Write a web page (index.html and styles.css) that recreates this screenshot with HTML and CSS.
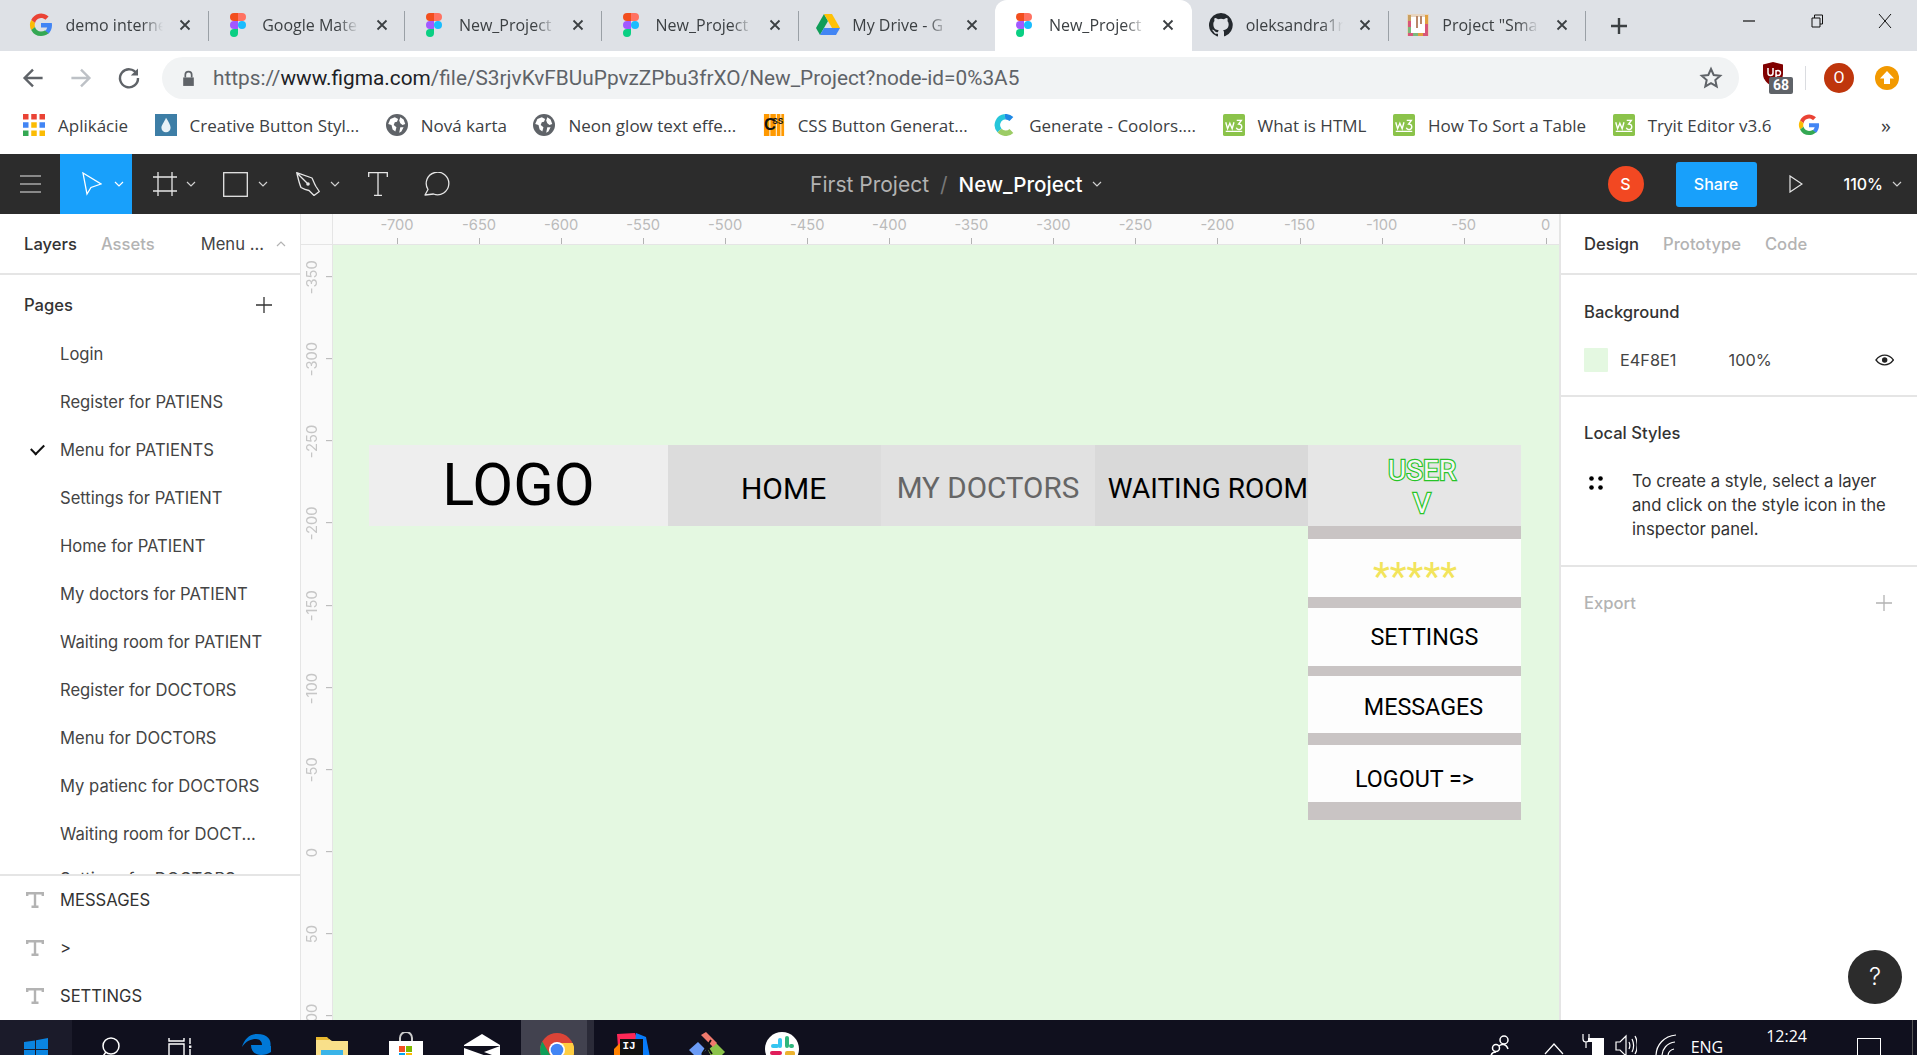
FILE: index.html
```html
<!DOCTYPE html>
<html lang="en">
<head>
<meta charset="utf-8">
<title>New_Project - Figma</title>
<link rel="stylesheet" href="styles.css">
</head>
<body>
<svg class="defs" width="0" height="0" aria-hidden="true">
  <defs>
    <symbol id="figma" viewBox="0 0 16 24">
      <path fill="#f24e1e" d="M0 4a4 4 0 0 1 4-4h4v8H4a4 4 0 0 1-4-4z"/>
      <path fill="#ff7262" d="M8 0h4a4 4 0 0 1 0 8H8z"/>
      <path fill="#a259ff" d="M0 12a4 4 0 0 1 4-4h4v8H4a4 4 0 0 1-4-4z"/>
      <circle fill="#1abcfe" cx="12" cy="12" r="4"/>
      <path fill="#0acf83" d="M0 20a4 4 0 0 1 4-4h4v4a4 4 0 0 1-8 0z"/>
    </symbol>
    <symbol id="google" viewBox="0 0 24 24">
      <path fill="#ea4335" d="M12 5c1.700 0 3.200.6 4.400 1.700l3.200-3.200A11 11 0 0 0 2.200 7l3.800 3A6.600 6.600 0 0 1 12 5z"/>
      <path fill="#4285f4" d="M23 12.300c0-.8-.1-1.600-.2-2.300H12v4.400h6.200a5.300 5.300 0 0 1-2.300 3.500l3.600 2.800c2.100-2 3.500-4.900 3.500-8.400z"/>
      <path fill="#fbbc05" d="M6 14a6.700 6.700 0 0 1 0-4L2.200 7a11 11 0 0 0 0 10z"/>
      <path fill="#34a853" d="M12 23c3 0 5.500-1 7.500-2.800l-3.600-2.800c-1 .7-2.300 1.100-3.900 1.100a6.600 6.600 0 0 1-6-4.500l-3.800 3A11 11 0 0 0 12 23z"/>
    </symbol>
    <symbol id="drive" viewBox="0 0 24 22">
      <path fill="#0f9d58" d="M8 0 0 14l4 7 8-14z"/>
      <path fill="#ffc107" d="M8 0h8l8 14h-8z"/>
      <path fill="#4285f4" d="M4 21h16l4-7H8z"/>
    </symbol>
    <symbol id="github" viewBox="0 0 16 16">
      <path fill="#24292e" d="M8 0a8 8 0 0 0-2.500 15.600c.4.100.5-.2.500-.4v-1.400c-2.200.5-2.700-1-2.700-1-.4-.9-.9-1.200-.9-1.200-.7-.5.100-.5.100-.5.800.1 1.200.8 1.200.8.700 1.200 1.900.9 2.300.7.100-.5.300-.9.500-1.100-1.800-.2-3.600-.9-3.600-4 0-.9.300-1.600.8-2.100-.1-.2-.4-1 .1-2.100 0 0 .7-.2 2.200.8a7.600 7.600 0 0 1 4 0c1.500-1 2.200-.8 2.200-.8.400 1.100.2 1.900.1 2.100.5.600.8 1.300.8 2.100 0 3.100-1.900 3.700-3.700 3.900.3.300.6.800.6 1.500v2.200c0 .2.100.5.600.4A8 8 0 0 0 8 0z"/>
    </symbol>
    <symbol id="globe" viewBox="0 0 20 20">
      <circle cx="10" cy="10" r="10" fill="#5f6368"/>
      <path fill="#fff" d="M4 4.500 8 3l3 1.500-1 2.500-2 .5L7 10l2.500 2-1 4L6 14l-1-4-3-1zM13 3l3 2 1.500 4-2.500 1-2-1.500L12 6zM13 12h3l-2 4-2 1z"/>
    </symbol>
    <symbol id="w3" viewBox="0 0 24 24">
      <rect width="24" height="24" rx="2" fill="#8bc34a"/>
      <path fill="none" stroke="#fff" stroke-width="1.500" d="M3 9l2 7 2.500-6 2.500 6 2-7M15 7h5l-3 4c2 0 3.500 1 3.500 3s-1.500 3-3 3-2.500-.7-3-2M3 19h18"/>
    </symbol>
    <symbol id="chev" viewBox="0 0 10 6">
      <path fill="none" stroke="currentColor" stroke-width="1.200" d="M1 1l4 4 4-4"/>
    </symbol>
    <symbol id="x" viewBox="0 0 12 12">
      <path fill="none" stroke="#3c4043" stroke-width="1.800" d="M1.500 1.500l9 9M10.500 1.500l-9 9"/>
    </symbol>
    <symbol id="type" viewBox="0 0 18 16">
      <path fill="none" stroke="#b3b3b3" stroke-width="2.400" d="M1.200 4V1.200h15.600V4M9 1.200v13.600M5.500 14.800h7"/>
    </symbol>
    <symbol id="plus" viewBox="0 0 18 18">
      <path fill="none" stroke="currentColor" stroke-width="1.300" d="M9 1v16M1 9h16"/>
    </symbol>
  </defs>
</svg>

<header class="chrome">
  <div class="tabs">
    <div class="tab sep"><svg class="fav"><use href="#google"/></svg><span class="tab-title">demo interne</span><svg class="tab-x"><use href="#x"/></svg></div>
    <div class="tab sep"><svg class="fav"><use href="#figma"/></svg><span class="tab-title">Google Mate</span><svg class="tab-x"><use href="#x"/></svg></div>
    <div class="tab sep"><svg class="fav"><use href="#figma"/></svg><span class="tab-title">New_Project</span><svg class="tab-x"><use href="#x"/></svg></div>
    <div class="tab sep"><svg class="fav"><use href="#figma"/></svg><span class="tab-title">New_Project</span><svg class="tab-x"><use href="#x"/></svg></div>
    <div class="tab"><svg class="fav"><use href="#drive"/></svg><span class="tab-title">My Drive - G</span><svg class="tab-x"><use href="#x"/></svg></div>
    <div class="tab active"><svg class="fav"><use href="#figma"/></svg><span class="tab-title">New_Project</span><svg class="tab-x"><use href="#x"/></svg></div>
    <div class="tab sep"><svg class="fav"><use href="#github"/></svg><span class="tab-title">oleksandra1r</span><svg class="tab-x"><use href="#x"/></svg></div>
    <div class="tab sep"><svg class="fav" viewBox="0 0 24 24"><rect x="1" y="1" width="22" height="22" fill="#e8d5c0"/><rect x="5" y="4" width="14" height="16" fill="#fff"/><path d="M10 3h2v12h-2zM14 3h2v8h-2z" fill="#b9876a"/><path d="M2 20h5v3H2z" fill="#d8567a"/><path d="M7 20h5v3H7z" fill="#7cb87c"/><path d="M12 20h5v3h-5z" fill="#e0a040"/><path d="M17 20h5v3h-5z" fill="#d8567a"/><path d="M2 2h3v6H2z" fill="#c9a060"/><path d="M2 8h3v6H2z" fill="#d8567a"/><path d="M2 14h3v6H2z" fill="#7cb87c"/><path d="M19 2h3v9h-3z" fill="#e0a040"/><path d="M19 11h3v9h-3z" fill="#d8567a"/></svg><span class="tab-title">Project "Sma</span><svg class="tab-x"><use href="#x"/></svg></div>
    <svg class="new-tab" viewBox="0 0 18 18"><path fill="none" stroke="#3c4043" stroke-width="2.400" d="M9 1v16M1 9h16"/></svg>
    <div class="window-btns">
      <svg class="win-btn" viewBox="0 0 16 16"><path stroke="#111" stroke-width="1.200" d="M2 8h12"/></svg>
      <svg class="win-btn" viewBox="0 0 16 16"><path fill="none" stroke="#111" stroke-width="1" d="M3 5h8v9H3zM5.500 5V2h8v9H11"/></svg>
      <svg class="win-btn" viewBox="0 0 16 16"><path fill="none" stroke="#111" stroke-width="1" d="M2 1l12 14M14 1 2 15"/></svg>
    </div>
  </div>

  <div class="addressbar">
    <svg class="nav-ic" viewBox="0 0 20 20"><path fill="none" stroke="#5f6368" stroke-width="2" d="M18 10H3M10 3l-7 7 7 7"/></svg>
    <svg class="nav-ic" viewBox="0 0 20 20"><path fill="none" stroke="#bdc1c6" stroke-width="2" d="M2 10h15M10 3l7 7-7 7"/></svg>
    <svg class="nav-ic" viewBox="0 0 20 20"><path fill="none" stroke="#5f6368" stroke-width="2" d="M16.500 6.500A7.500 7.500 0 1 0 17.500 10"/><path fill="#5f6368" d="M17.500 2v6h-6z"/></svg>
    <div class="omnibox">
      <svg class="lock" viewBox="0 0 12 16"><path fill="#5f6368" d="M1 7h10v8H1z"/><path fill="none" stroke="#5f6368" stroke-width="1.600" d="M3 7V4.500a3 3 0 0 1 6 0V7"/></svg>
      <span class="url"><span class="url-dim">https://</span>www.figma.com<span class="url-dim">/file/S3rjvKvFBUuPpvzZPbu3frXO/New_Project?node-id=0%3A5</span></span>
      <svg class="star" viewBox="0 0 24 24"><path fill="none" stroke="#5f6368" stroke-width="2" d="M12 3l2.700 6 6.500.7-4.900 4.300 1.400 6.400L12 17.100l-5.700 3.300 1.400-6.400-4.900-4.300 6.500-.7z"/></svg>
    </div>
    <div class="ext">
      <svg class="ublock" viewBox="0 0 22 25"><path fill="#800000" d="M11 0l10 2.500V12c0 6-5 10-10 13C6 22 1 18 1 12V2.500z"/><path fill="none" stroke="#fff" stroke-width="1.500" d="M6 6v5a2.500 2.500 0 0 0 5 0V6M14 8v8M14 9.500a2.500 2.500 0 1 1 0 3"/></svg>
      <span class="ext-badge">68</span>
    </div>
    <span class="ext-sep"></span>
    <span class="profile">O</span>
    <svg class="update" viewBox="0 0 24 24"><circle cx="12" cy="12" r="12" fill="#f29900"/><path fill="#fff" d="M12 5l7 7.500h-4V18H9v-5.500H5z"/></svg>
  </div>

  <nav class="bookmarks">
    <span class="bm"><svg class="bm-ic" viewBox="0 0 20 20"><g><rect width="5" height="5" fill="#ea4335"/><rect x="7.500" width="5" height="5" fill="#ea4335"/><rect x="15" width="5" height="5" fill="#ea4335"/><rect y="7.500" width="5" height="5" fill="#4285f4"/><rect x="7.500" y="7.500" width="5" height="5" fill="#fbbc05"/><rect x="15" y="7.500" width="5" height="5" fill="#4285f4"/><rect y="15" width="5" height="5" fill="#34a853"/><rect x="7.500" y="15" width="5" height="5" fill="#fbbc05"/><rect x="15" y="15" width="5" height="5" fill="#fbbc05"/></g></svg>Aplikácie</span>
    <span class="bm"><svg class="bm-ic" viewBox="0 0 24 24"><rect width="24" height="24" fill="#3d7ea6"/><path fill="#e8f2f7" d="M12 4c3 5 5 8 5 11a5 5 0 0 1-10 0c0-3 3-6 5-11z"/></svg>Creative Button Styl...</span>
    <span class="bm"><svg class="bm-ic"><use href="#globe"/></svg>Nová karta</span>
    <span class="bm"><svg class="bm-ic"><use href="#globe"/></svg>Neon glow text effe...</span>
    <span class="bm"><svg class="bm-ic" viewBox="0 0 22 24"><rect width="22" height="24" fill="#f90"/><path fill="#fff" d="M6 0h1v24H6zM13 0h1v24h-1zM18 0h1v24h-1z"/><text x="0" y="17" class="css-t">C</text><text x="9" y="11" class="css-s">SS</text></svg>CSS Button Generat...</span>
    <span class="bm"><svg class="bm-ic" viewBox="0 0 24 24"><path fill="none" stroke="#1e88e5" stroke-width="6" d="M19 5.500A9 9 0 0 0 12 3"/><path fill="none" stroke="#26c6da" stroke-width="6" d="M12 3a9 9 0 0 0-6 15"/><path fill="none" stroke="#9ccc65" stroke-width="6" d="M6 18a9 9 0 0 0 13 .5"/></svg>Generate - Coolors....</span>
    <span class="bm"><svg class="bm-ic"><use href="#w3"/></svg>What is HTML</span>
    <span class="bm"><svg class="bm-ic"><use href="#w3"/></svg>How To Sort a Table</span>
    <span class="bm"><svg class="bm-ic"><use href="#w3"/></svg>Tryit Editor v3.6</span>
    <span class="bm"><svg class="bm-ic"><use href="#google"/></svg></span>
    <span class="bm-more">»</span>
  </nav>
</header>

<section class="figma-bar">
  <div class="tools">
    <svg class="burger" viewBox="0 0 21 18"><path stroke="#e6e6e6" stroke-width="1.200" d="M0 1h21M0 9h21M0 17h21"/></svg>
    <div class="tool-active">
      <svg class="ic-move" viewBox="0 0 20 24"><path fill="none" stroke="#fff" stroke-width="1.300" d="M1 1l18 11-10 3.500L5 22z"/></svg>
      <svg class="chev chev-w"><use href="#chev"/></svg>
    </div>
    <svg class="ic-frame" viewBox="0 0 24 24"><path fill="none" stroke="#e6e6e6" stroke-width="1.300" d="M5 0v24M19 0v24M0 5h24M0 19h24"/></svg>
    <svg class="chev ch-frame"><use href="#chev"/></svg>
    <svg class="ic-rect" viewBox="0 0 25 25"><rect x=".7" y=".7" width="23.600" height="23.600" fill="none" stroke="#e6e6e6" stroke-width="1.300"/></svg>
    <svg class="chev ch-rect"><use href="#chev"/></svg>
    <svg class="ic-pen" viewBox="0 0 24 24"><path fill="none" stroke="#e6e6e6" stroke-width="1.300" stroke-linejoin="round" d="M.7.700 16 6c1.500 3 2.500 6 4 8.500l3.300 5-5.300 4-5-5c-3-.5-5.500-1.500-8-3C3 11 2 5.500.7.700zM.7.700 11 11"/><circle cx="12" cy="12" r="1.800" fill="#e6e6e6"/></svg>
    <svg class="chev ch-pen"><use href="#chev"/></svg>
    <svg class="ic-t" viewBox="0 0 20 24"><path fill="none" stroke="#e6e6e6" stroke-width="1.300" d="M.7 5V.7h18.600V5M10 .7v22.600M6 23.300h8"/></svg>
    <svg class="ic-comment" viewBox="0 0 26 24"><path fill="none" stroke="#e6e6e6" stroke-width="1.300" stroke-linejoin="round" d="M1 23l3-5.500A11.300 11.300 0 1 1 9.500 22z"/></svg>
  </div>
  <div class="doc-title">
    <span class="doc-folder">First Project</span>
    <span class="doc-slash">/</span>
    <span class="doc-name">New_Project</span>
    <svg class="chev"><use href="#chev"/></svg>
  </div>
  <div class="bar-right">
    <span class="avatar">S</span>
    <span class="share">Share</span>
    <svg class="play" viewBox="0 0 14 18"><path fill="none" stroke="#e6e6e6" stroke-width="1.200" d="M1 1l12 8-12 8z"/></svg>
    <span class="zoom-val">110%</span>
    <svg class="chev"><use href="#chev"/></svg>
  </div>
</section>

<main class="workspace">
  <aside class="left-panel">
    <div class="panel-tabs">
      <span class="ptab on">Layers</span>
      <span class="ptab off">Assets</span>
      <span class="page-name">Menu ...</span>
      <svg class="chev-up" viewBox="0 0 10 6"><path fill="none" stroke="#b3b3b3" stroke-width="1.200" d="M1 5l4-4 4 4"/></svg>
    </div>
    <div class="pages">
      <div class="pages-head"><span class="label">Pages</span><svg class="plus"><use href="#plus"/></svg></div>
      <ul class="page-list">
        <li>Login</li>
        <li>Register for PATIENS</li>
        <li class="current">Menu for PATIENTS</li>
        <li>Settings for PATIENT</li>
        <li>Home for PATIENT</li>
        <li>My doctors for PATIENT</li>
        <li>Waiting room for PATIENT</li>
        <li>Register for DOCTORS</li>
        <li>Menu for DOCTORS</li>
        <li>My patienc for DOCTORS</li>
        <li>Waiting room for DOCT...</li>
        <li class="peek">Settings for DOCTORS</li>
      </ul>
    </div>
    <ul class="layers">
      <li><svg class="t-ic"><use href="#type"/></svg>MESSAGES</li>
      <li><svg class="t-ic"><use href="#type"/></svg>&gt;</li>
      <li><svg class="t-ic"><use href="#type"/></svg>SETTINGS</li>
    </ul>
  </aside>

  <div class="stage">
    <div class="ruler-corner"></div>
    <div class="ruler-h">
      <span>-700</span><span>-650</span><span>-600</span><span>-550</span><span>-500</span><span>-450</span><span>-400</span><span>-350</span><span>-300</span><span>-250</span><span>-200</span><span>-150</span><span>-100</span><span>-50</span><span>0</span>
    </div>
    <div class="ruler-v">
      <span>-350</span><span>-300</span><span>-250</span><span>-200</span><span>-150</span><span>-100</span><span>-50</span><span>0</span><span>50</span><span>100</span>
    </div>
    <div class="canvas">
      <div class="mock">
        <div class="mock-nav">
          <div class="m-logo">LOGO</div>
          <div class="m-item m-home">HOME</div>
          <div class="m-item m-docs">MY DOCTORS</div>
          <div class="m-item m-wait">WAITING ROOM</div>
          <div class="m-user"><span>USER</span><span>V</span></div>
        </div>
        <div class="mock-menu">
          <div class="m-bar b13"></div>
          <div class="m-row m-stars">*****</div>
          <div class="m-bar b11"></div>
          <div class="m-row m-set">SETTINGS</div>
          <div class="m-bar b10"></div>
          <div class="m-row m-msg">MESSAGES</div>
          <div class="m-bar b12"></div>
          <div class="m-row m-out">LOGOUT =&gt;</div>
          <div class="m-bar b18"></div>
        </div>
      </div>
    </div>
  </div>

  <aside class="right-panel">
    <div class="panel-tabs right-tabs">
      <span class="ptab on">Design</span>
      <span class="ptab off">Prototype</span>
      <span class="ptab off">Code</span>
    </div>
    <section class="sec sec-bg">
      <div class="label">Background</div>
      <div class="bg-row">
        <span class="swatch"></span>
        <span class="hex">E4F8E1</span>
        <span class="pct">100%</span>
        <svg class="eye" viewBox="0 0 20 12"><path fill="none" stroke="#222" stroke-width="1.300" d="M1 6c2.500-3.300 5.500-5 9-5s6.500 1.700 9 5c-2.500 3.300-5.500 5-9 5S3.500 9.300 1 6z"/><circle cx="10" cy="6" r="2.800" fill="#222"/></svg>
      </div>
    </section>
    <section class="sec sec-styles">
      <div class="label">Local Styles</div>
      <div class="style-row">
        <svg class="dots" viewBox="0 0 14 14"><circle cx="2.500" cy="2.500" r="2.300"/><circle cx="11.500" cy="2.500" r="2.300"/><circle cx="2.500" cy="11.500" r="2.300"/><circle cx="11.500" cy="11.500" r="2.300"/></svg>
        <p>To create a style, select a layer and click on the style icon in the inspector panel.</p>
      </div>
    </section>
    <section class="sec-export">
      <span class="label off-label">Export</span>
      <svg class="plus plus-off"><use href="#plus"/></svg>
    </section>
    <div class="help">?</div>
  </aside>
</main>

<footer class="taskbar">
  <div class="start"><svg class="win-logo" viewBox="0 0 24 24"><path fill="#0a84e0" d="M0 4l11-1.500V11H0zM12 2.300 24 0v11H12zM0 12h11v9L0 19.500zM12 12h12v12l-12-2z"/></svg></div>
  <svg class="tb-search" viewBox="0 0 24 24"><circle cx="11" cy="10" r="8" fill="none" stroke="#fff" stroke-width="1.500"/><path stroke="#fff" stroke-width="1.500" d="M6 16l-5 7"/></svg>
  <svg class="tb-view" viewBox="0 0 24 24"><path fill="none" stroke="#fff" stroke-width="1.400" d="M1 0v3h15V0M1 6h15v16H1zM22 0v6M22 11v11"/><path fill="#fff" d="M21 7.500h2.400v2.400H21z"/></svg>
  <svg class="tb-edge" viewBox="0 0 30 24"><path fill="#0078d7" d="M15 0C7 0 2 6 0 13c4-6 9-8 14-8 4 0 6 3 6 6H9c0 6 4 10 10 10 4 0 7-1 10-3v-6h-.5c.5-4-.5-12-13.500-12z"/></svg>
  <svg class="tb-folder" viewBox="0 0 32 24"><path fill="#f9e08a" d="M0 2h13l3 2h16v20H0z"/><path fill="#e8b830" d="M0 0h11l3 3H0z"/><path fill="#3ab4e8" d="M5 13h22v11H5z"/></svg>
  <svg class="tb-store" viewBox="0 0 34 30"><path fill="none" stroke="#ccc" stroke-width="2" d="M11 10V6a6 6 0 0 1 12 0v4"/><path fill="#fff" d="M0 9h34v21H0z"/><path fill="#f25022" d="M10 14h6v6h-6z"/><path fill="#7fba00" d="M17 14h6v6h-6z"/><path fill="#00a4ef" d="M10 21h6v6h-6z"/><path fill="#ffb900" d="M17 21h6v6h-6z"/></svg>
  <svg class="tb-mail" viewBox="0 0 36 24"><path fill="#fff" d="M18 0l18 11v13H0V11z"/><path fill="#10101e" d="M0 12h36L20 18l16 6h-8L0 14z"/></svg>
  <div class="tb-active"><svg class="tb-chrome" viewBox="0 0 34 34"><circle cx="17" cy="17" r="17" fill="#db4437"/><path fill="#0f9d58" d="M2.300 8.500 9.500 21l5 12.800A17 17 0 0 1 2.300 8.500z"/><path fill="#ffcd40" d="M17 10h15.700A17 17 0 0 1 14.500 33.800L24 21z"/><circle cx="17" cy="17" r="8" fill="#fff"/><circle cx="17" cy="17" r="6.300" fill="#4285f4"/></svg></div>
  <svg class="tb-ij" viewBox="0 0 36 24"><path fill="#fe2857" d="M3 1l18-1 3 8-20 6z"/><path fill="#087cfa" d="M22 0l10 4 4 20H20z"/><path fill="#ff8100" d="M0 16l6-6v14H0z"/><rect x="6" y="6" width="23" height="18" fill="#111"/><text x="8.500" y="16" class="ij-t">IJ</text></svg>
  <svg class="tb-sk" viewBox="0 0 36 24"><path fill="#6b9bf5" d="M9 10l8 8-6 6H6L0 18z"/><path fill="#8bc34a" d="M27 11l9 9-4 4H22l-3-6z"/><path fill="#ef7a6e" d="M12 3l5-3 11 11-4 4z"/><path stroke="#111" stroke-width="1.800" d="M14 8l9 14M22 8l-9 14"/></svg>
  <svg class="tb-slack" viewBox="0 0 34 34"><circle cx="17" cy="17" r="17" fill="#fff"/><rect x="13" y="6" width="4" height="10" rx="2" fill="#36c5f0"/><rect x="6" y="12" width="8" height="4" rx="2" fill="#36c5f0"/><rect x="20" y="4" width="4" height="12" rx="2" fill="#2eb67d"/><rect x="24" y="12" width="5" height="4" rx="2" fill="#2eb67d"/><rect x="5" y="19" width="12" height="4" rx="2" fill="#e01e5a"/><rect x="20" y="19" width="10" height="5" rx="2" fill="#ecb22e"/></svg>
  <div class="tray">
    <svg class="tr-people" viewBox="0 0 22 22"><g fill="none" stroke="#fff" stroke-width="1.500"><circle cx="14" cy="5" r="4"/><circle cx="6" cy="13" r="3.500"/><path d="M9 11c2-2 7-3 9 3M1 22c0-3 2-5 5-5"/></g></svg>
    <svg class="tr-up" viewBox="0 0 20 12"><path fill="none" stroke="#fff" stroke-width="1.200" d="M1 11l9-10 9 10"/></svg>
    <svg class="tr-bat" viewBox="0 0 24 22"><path fill="none" stroke="#fff" stroke-width="1.200" d="M3 0v5a3 3 0 0 0 6 0V0M6 8v6"/><path fill="#fff" d="M8 4h16v18H12V8H8z"/></svg>
    <svg class="tr-vol" viewBox="0 0 22 22"><path fill="none" stroke="#fff" stroke-width="1.200" d="M1 8h4l6-6v20l-6-6H1zM14 8c1 2 1 5 0 7M17 5c2 4 2 9 0 13M20 2c3 5 3 13 0 18"/></svg>
    <svg class="tr-wifi" viewBox="0 0 22 22"><path fill="none" stroke="#fff" stroke-width="1.200" d="M1 22C1 11 9 2 21 1M7 22c0-7 5-13 13-14M13 22c0-3 2-6 6-7"/></svg>
    <span class="tr-lang">ENG</span>
    <span class="tr-clock">12:24</span>
    <span class="tr-notify"></span>
    <span class="tr-desk"></span>
  </div>
</footer>
</body>
</html>
```
FILE: styles.css
```css
* { box-sizing: border-box; }
html, body { margin: 0; height: 100%; }
body {
  width: 1917px; height: 1055px; overflow: hidden;
  display: flex; flex-direction: column;
  font-family: Inter, "Liberation Sans", sans-serif;
  color: #333; background: #fff;
}
.defs { position: absolute; }
ul { list-style: none; margin: 0; padding: 0; }

/* browser chrome */
.chrome { flex: none; font-family: "Open Sans", "Liberation Sans", sans-serif; color: #3c4043; }
.tabs { height: 51px; background: #dee1e6; display: flex; align-items: center; padding-left: 12px; }
.tab {
  position: relative; flex: none; width: 196.700px; height: 51px;
  display: flex; align-items: center; padding: 0 0 2px 17px; font-size: 16px;
}
.tab.sep::after {
  content: ""; position: absolute; right: 0; top: 11px; height: 30px; width: 1px; background: #9aa0a6;
}
.tab.active { background: #fff; border-radius: 12px 12px 0 0; }
.fav { width: 24px; height: 24px; flex: none; }
.tab-title {
  width: 97px; margin-left: 12.500px; white-space: nowrap; overflow: hidden;
  -webkit-mask-image: linear-gradient(90deg, #000 78%, transparent 100%);
  mask-image: linear-gradient(90deg, #000 78%, transparent 100%);
}
.tab-x { width: 12px; height: 12px; margin-left: 16.500px; flex: none; }
.new-tab { width: 18px; height: 18px; margin-left: 24px; flex: none; }
.window-btns { margin-left: auto; display: flex; gap: 52px; padding-right: 24px; align-self: flex-start; padding-top: 13px; }
.win-btn { width: 16px; height: 16px; }

.addressbar { height: 51px; display: flex; align-items: center; padding: 3px 0 0 21px; }
.nav-ic { width: 24px; height: 24px; margin-right: 24px; flex: none; }
.nav-ic:nth-child(3) { margin-right: 20px; }
.omnibox {
  width: 1577px; height: 42px; border-radius: 21px; background: #f1f3f4;
  display: flex; align-items: center; padding: 0 16px 0 20px; flex: none; margin-left: 1px;
}
.lock { width: 13px; height: 17px; flex: none; }
.url { margin-left: 18px; font: 20.800px Roboto, sans-serif; color: #202124; white-space: nowrap; flex: 1; }
.url-dim { color: #5f6368; }
.star { width: 24px; height: 24px; flex: none; }
.ext { position: relative; margin-left: 23px; width: 31px; height: 32px; flex: none; }
.ublock { width: 22px; height: 25px; display: block; }
.ext-badge {
  position: absolute; left: 7px; top: 15px; width: 24px; height: 17px; border-radius: 2px;
  background: #5f6368; color: #fff; font: 700 14px/17px Roboto, sans-serif; text-align: center;
}
.ext-sep { width: 1px; height: 24px; background: #dadce0; margin-left: 12px; flex: none; }
.profile {
  width: 30px; height: 30px; border-radius: 50%; background: #bf360c; color: #fff; margin-left: 18px; flex: none;
  font: 16px/30px Roboto, sans-serif; text-align: center;
}
.update { width: 24px; height: 24px; margin-left: 21px; flex: none; }

.bookmarks { height: 52px; display: flex; align-items: center; padding: 0 0 6px 23px; gap: 26.500px; font-size: 17px; white-space: nowrap; }
.bm { display: flex; align-items: center; gap: 13px; }
.bm-ic { width: 22px; height: 22px; flex: none; }
.css-t { font: bold 18px "Liberation Sans", sans-serif; fill: #111; }
.css-s { font: bold 9px "Liberation Sans", sans-serif; fill: #111; }
.bm-more { margin-left: auto; margin-right: 26px; font-size: 20px; }

/* figma toolbar */
.figma-bar {
  flex: none; height: 60px; background: #2c2c2c; color: #e6e6e6; position: relative;
  display: flex; align-items: center; justify-content: space-between;
}
.tools { display: flex; align-items: center; height: 100%; padding-left: 20px; }
.burger { width: 21px; height: 18px; margin-right: 19px; flex: none; }
.tool-active { width: 72px; height: 60px; background: #18a0fb; display: flex; align-items: center; padding-left: 22px; margin-right: 21px; flex: none; }
.ic-move { width: 20px; height: 24px; flex: none; }
.chev { width: 10px; height: 6px; flex: none; color: #d0d0d0; }
.chev-w { margin-left: 12px; color: #fff; }
.ic-frame { width: 24px; height: 24px; flex: none; }
.ch-frame { margin-left: 9px; }
.ic-rect { width: 25px; height: 25px; flex: none; margin-left: 27px; }
.ch-rect { margin-left: 10px; }
.ic-pen { width: 24px; height: 24px; flex: none; margin-left: 28px; }
.ch-pen { margin-left: 10px; }
.ic-t { width: 20px; height: 24px; flex: none; margin-left: 28px; }
.ic-comment { width: 26px; height: 24px; flex: none; margin-left: 36px; }
.doc-title { position: absolute; left: 810px; top: 0; height: 60px; display: flex; align-items: center; font-size: 21px; white-space: nowrap; }
.doc-folder { color: #b3b3b3; }
.doc-slash { color: #777; margin: 0 11px; }
.doc-name { color: #fff; font-weight: 500; font-size: 20.600px; margin-right: 9px; }
.bar-right { display: flex; align-items: center; margin-left: auto; padding-right: 15px; }
.avatar { width: 36px; height: 36px; border-radius: 50%; background: #f24822; color: #fff; font: 500 16px/36px Inter, sans-serif; text-align: center; margin-right: 32px; }
.share { width: 81px; height: 45px; background: #18a0fb; color: #fff; border-radius: 3px; font: 500 16px/45px Inter, sans-serif; text-align: center; margin-right: 32px; }
.play { width: 14px; height: 18px; margin-right: 41px; }
.zoom-val { font-size: 16px; font-weight: 500; margin-right: 9px; color: #fff; }

/* workspace */
.workspace { flex: 1; min-height: 0; display: flex; }
.left-panel { width: 301px; flex: none; display: flex; flex-direction: column; background: #fff; border-right: 1px solid #e5e5e5; font-size: 16.600px; }
.panel-tabs {
  height: 61px; flex: none; display: flex; align-items: center; padding: 0 24px; border-bottom: 2px solid #e5e5e5; font-weight: 500;
}
.ptab.on { color: #333; }
.ptab.off { color: #b3b3b3; margin-left: 24px; }
.page-name { margin-left: auto; color: #444; font-weight: 400; }
.chev-up { width: 10px; height: 6px; margin-left: 12px; margin-right: -10px; }
.pages { height: 601px; flex: none; overflow: hidden; border-bottom: 2px solid #e5e5e5; }
.pages-head { height: 60px; display: flex; align-items: center; justify-content: space-between; padding: 0 27px 0 24px; }
.label { font-weight: 500; color: #333; font-size: 16.600px; }
.plus { width: 18px; height: 18px; color: #333; }
.page-list { margin-top: -5px; }
.page-list li { height: 48px; line-height: 48px; padding-left: 60px; color: #444; position: relative; white-space: nowrap; }
.page-list li.peek { margin-top: -3px; }
.page-list li.current::before {
  content: ""; position: absolute; left: 31px; top: 18px; width: 11px; height: 6px;
  border-left: 2.500px solid #111; border-bottom: 2.500px solid #111; transform: rotate(-45deg);
}
.layers li { height: 48px; display: flex; align-items: center; color: #333; white-space: nowrap; }
.t-ic { width: 18px; height: 16px; margin-left: 26px; margin-right: 16px; flex: none; }

.stage { flex: 1; min-width: 0; display: grid; grid-template-columns: 32px 1fr; grid-template-rows: 31px 1fr; min-height: 0; }
.ruler-corner { background: #fafafa; border-right: 1px solid #e5e5e5; border-bottom: 1px solid #e5e5e5; }
.ruler-h { background: #fafafa; border-bottom: 1px solid #e5e5e5; display: flex; padding-left: 23px; overflow: hidden; }
.ruler-h span {
  flex: none; width: 82.050px; text-align: center; font-size: 14.700px; color: #bbb; line-height: 20px; position: relative; padding-top: 1px;
}
.ruler-h span::after { content: ""; position: absolute; left: 50%; bottom: 0; width: 1px; height: 6px; background: #b3b3b3; }
.ruler-v { background: #fafafa; border-right: 1px solid #e5e5e5; display: flex; flex-direction: column; overflow: hidden; }
.ruler-v span {
  flex: none; height: 82.150px; writing-mode: vertical-rl; transform: rotate(180deg); text-align: center;
  font-size: 14.700px; color: #c6c6c6; line-height: 22px; position: relative; padding-left: 3px;
}
.ruler-v span:first-child { margin-top: -9px; }
.ruler-v span::after { content: ""; position: absolute; top: 50%; left: 0; height: 1px; width: 6px; background: #b3b3b3; }
.canvas { background: #e4f8e1; position: relative; overflow: hidden; }

.mock { position: absolute; left: 36px; top: 200px; width: 1152px; font-family: Roboto, sans-serif; color: #000; }
.mock-nav { display: flex; height: 81px; }
.m-logo { width: 299px; background: #eeeeee; font-size: 59.500px; line-height: 80px; text-align: center; }
.m-item { width: 213.500px; background: #dcdcdc; font-size: 29.600px; line-height: 87px; text-align: center; white-space: nowrap; }
.m-home { padding-left: 18px; font-size: 30px; }
.m-docs { background: #e1e1e1; color: #666; }
.m-wait { background: #d9d9d9; font-size: 28px; text-align: left; padding-left: 13px; }
.m-user { width: 213px; background: #e6e6e6; display: flex; flex-direction: column; align-items: center; font-size: 28px; line-height: 33px; padding: 9px 0 0 15px; color: #f6f6f6; -webkit-text-stroke: 2.400px #27c427; paint-order: stroke fill; }
.mock-menu { margin-left: 939px; width: 213px; display: flex; flex-direction: column; }
.m-bar { background: #c9c4c4; }
.b13 { height: 13px; } .b11 { height: 11px; } .b10 { height: 10px; } .b12 { height: 12px; } .b18 { height: 18px; }
.m-row { background: #fdfdfd; height: 58px; font-size: 23.300px; line-height: 58px; text-align: center; }
.m-set { padding-left: 20px; }
.m-msg { height: 57px; padding: 2px 0 0 18px; }
.m-out { height: 57px; padding-top: 5px; }
.m-stars { color: #f2e45c; font-size: 39px; line-height: 76px; padding-left: 1px; }

.right-panel { width: 358px; flex: none; border-left: 2px solid #e5e5e5; position: relative; background: #fff; font-size: 16px; }
.right-tabs { padding-left: 23px; font-size: 16.600px; }
.sec { padding: 0 23px; border-bottom: 2px solid #e5e5e5; }
.sec-bg { height: 122px; padding-top: 25px; }
.sec .label, .sec-export .label { line-height: 24px; }
.bg-row { display: flex; align-items: center; margin-top: 24px; color: #444; }
.swatch { width: 24px; height: 24px; background: #e4f8e1; border-radius: 1px; flex: none; }
.hex { margin-left: 12px; width: 108px; font-size: 16.300px; }
.pct { width: 155px; font-size: 16.300px; padding-left: 4px; }
.eye { width: 20px; height: 12px; }
.sec-styles { height: 170px; padding-top: 24px; }
.style-row { display: flex; margin-top: 24px; }
.dots { width: 14px; height: 14px; margin: 7px 0 0 5px; flex: none; }
.style-row p { margin: 0 0 0 29px; line-height: 24px; color: #333; width: 296px; font-size: 16.700px; }
.sec-export { display: flex; align-items: center; justify-content: space-between; padding: 24px 24px 0 23px; }
.off-label { color: #b3b3b3; }
.plus-off { color: #b3b3b3; }
.help {
  position: absolute; left: 287px; top: 736px; width: 54px; height: 54px; border-radius: 50%;
  background: #2c2c2c; color: #fff; font-size: 24px; font-weight: 300; line-height: 54px; text-align: center;
}

/* taskbar */
.taskbar { flex: none; height: 35px; background: #10101e; position: relative; overflow: hidden; display: flex; font-family: "Open Sans", sans-serif; color: #fff; }
.start { width: 72px; height: 35px; background: #1b1b2a; flex: none; display: flex; justify-content: center; padding-top: 18px; }
.win-logo { width: 24px; height: 24px; flex: none; }
.tb-search { width: 24px; height: 24px; flex: none; margin: 16px 0 0 28px; }
.tb-view { width: 24px; height: 24px; flex: none; margin: 18px 0 0 44px; }
.tb-edge { width: 30px; height: 24px; flex: none; margin: 14px 0 0 50px; }
.tb-folder { width: 32px; height: 24px; flex: none; margin: 17px 0 0 44px; }
.tb-store { width: 34px; height: 30px; flex: none; margin: 12px 0 0 41px; }
.tb-mail { width: 36px; height: 24px; flex: none; margin: 14px 0 0 41px; }
.tb-active { width: 73px; height: 35px; background: #42424f; margin-left: 21px; border-right: 7px solid #2b2b38; flex: none; display: flex; padding-left: 19px; }
.tb-chrome { width: 34px; height: 34px; flex: none; margin-top: 13px; }
.tb-ij { width: 36px; height: 24px; flex: none; margin: 13px 0 0 20px; }
.tb-sk { width: 36px; height: 24px; flex: none; margin: 12px 0 0 39px; }
.tb-slack { width: 34px; height: 34px; flex: none; margin: 12px 0 0 40px; }
.tray { margin-left: auto; display: flex; align-items: flex-start; height: 35px; position: relative; padding-right: 4px; }
.tr-people { width: 22px; height: 22px; margin-top: 15px; }
.tr-up { width: 20px; height: 12px; margin: 23px 0 0 32px; }
.tr-bat { width: 24px; height: 22px; margin: 14px 0 0 16px; }
.tr-vol { width: 22px; height: 22px; margin: 14px 0 0 11px; }
.tr-wifi { width: 22px; height: 22px; margin: 14px 0 0 18px; }
.tr-lang { font-size: 16px; margin: 16px 0 0 14px; }
.tr-clock { font-size: 16px; margin: 5px 0 0 43px; }
.tr-notify { width: 24px; height: 30px; border: 1px solid #fff; margin: 18px 0 0 50px; }
.tr-desk { width: 1px; height: 35px; background: #555; margin-left: 31px; }
.ij-t { font: bold 11px "Liberation Mono", monospace; fill: #fff; }
```
